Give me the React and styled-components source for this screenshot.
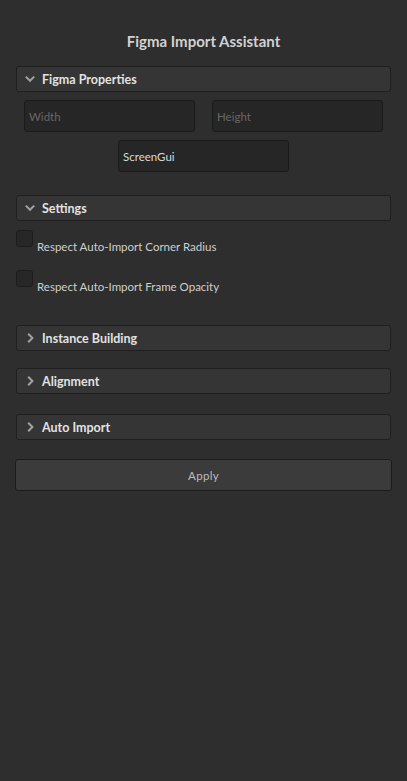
import React from "react";
import styled, { createGlobalStyle } from "styled-components";

const Global = createGlobalStyle`
    html, body {
        margin: 0;
        padding: 0;
        background: #2e2e2e;
    }
    body {
        font-family: Lato, "Open Sans", sans-serif;
        color: #cccccc;
    }
`

const Page = styled.div`
    display: flex;
    flex-direction: column;
    padding: 0 16px 0 16px;
    min-height: 781px;
    box-sizing: border-box;
`
const Title = styled.div`
    margin-top: 31px;
    height: 20px;
    line-height: 20px;
    text-align: center;
    font-size: 15px;
    font-weight: 700;
    color: #d2d2d2;
`
const Header = styled.div`
    display: flex;
    align-items: center;
    height: 26px;
    box-sizing: border-box;
    margin-top: ${(p) => p.top}px;
    background: #353535;
    border: 1px solid #1f1f1f;
    border-radius: 3px;
    padding-left: 7px;
    font-size: 12.5px;
    font-weight: 700;
    color: #e2e2e2;
`
const Chevron = styled.svg`
    width: 12px;
    height: 12px;
    margin-right: 6px;
    flex: none;
`
const InputGrid = styled.div`
    display: grid;
    grid-template-columns: 171px 171px;
    justify-content: space-between;
    padding: 0 8px;
    margin-top: 8px;
`
const Input = styled.div`
    width: 171px;
    height: 32px;
    box-sizing: border-box;
    display: flex;
    align-items: center;
    padding-left: 4px;
    background: #262626;
    border: 1px solid #1a1a1a;
    border-radius: 3px;
    font-size: 11.5px;
    color: ${(p) => (p.placeholder ? "#666666" : "#d8d8d8")};
`
const Centered = styled.div`
    display: flex;
    justify-content: center;
    margin-top: 8px;
`
const CheckRow = styled.div`
    display: flex;
    align-items: flex-start;
    margin-top: ${(p) => p.top}px;
    height: 24px;
`
const Box = styled.div`
    width: 17px;
    height: 17px;
    box-sizing: border-box;
    background: #272727;
    border: 1px solid #1c1c1c;
    border-radius: 3px;
    flex: none;
`
const CheckLabel = styled.span`
    margin-left: 4px;
    margin-top: 10px;
    font-size: 11.5px;
    line-height: 14px;
    color: #cfcfcf;
`
const Button = styled.button`
    margin: ${(p) => p.top}px -1px 0 -1px;
    height: 32px;
    background: #3b3b3b;
    border: 1px solid #1c1c1c;
    border-radius: 3px;
    font-family: inherit;
    font-size: 11.5px;
    letter-spacing: 0.3px;
    color: #bdbdbd;
`

const Arrow = ({ open }) => (
    <Chevron viewBox="0 0 10 10">
        {open ? (
            <path d="M1.5 3 L5 6.5 L8.5 3" fill="none" stroke="#a0a0a0" strokeWidth="1.7" />
        ) : (
            <path d="M3.5 1.5 L7 5 L3.5 8.5" fill="none" stroke="#a0a0a0" strokeWidth="1.7" />
        )}
    </Chevron>
)

export default function App() {
    return (
        <Page>
            <Global />
            <Title>Figma Import Assistant</Title>

            <Header top={15}>
                <Arrow open />
                Figma Properties
            </Header>
            <InputGrid>
                <Input placeholder="1">Width</Input>
                <Input placeholder="1">Height</Input>
            </InputGrid>
            <Centered>
                <Input>ScreenGui</Input>
            </Centered>

            <Header top={23}>
                <Arrow open />
                Settings
            </Header>
            <CheckRow top={9}>
                <Box />
                <CheckLabel>Respect Auto-Import Corner Radius</CheckLabel>
            </CheckRow>
            <CheckRow top={16}>
                <Box />
                <CheckLabel>Respect Auto-Import Frame Opacity</CheckLabel>
            </CheckRow>

            <Header top={31}>
                <Arrow />
                Instance Building
            </Header>
            <Header top={17}>
                <Arrow />
                Alignment
            </Header>
            <Header top={20}>
                <Arrow />
                Auto Import
            </Header>
            <Button top={19}>Apply</Button>
        </Page>
    );
}
